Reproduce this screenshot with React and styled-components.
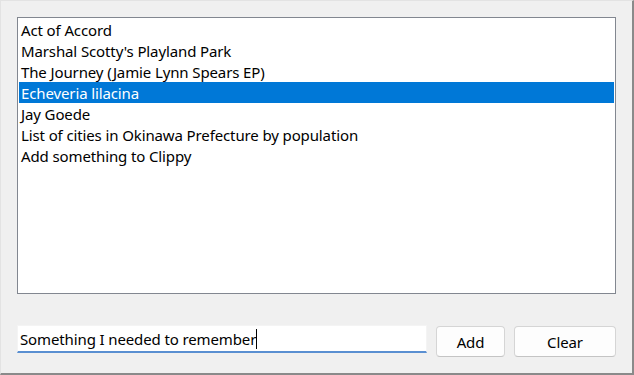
import React from "react";
import styled, { createGlobalStyle } from "styled-components";

const Global = createGlobalStyle`
  html, body { margin: 0; padding: 0; background: #f0f0f0; }
  * { box-sizing: border-box; }
`;

const Window = styled.div`
  width: 634px;
  height: 375px;
  background: #f0f0f0;
  border-top: 1px solid #e3e3e3;
  border-left: 1px solid #e3e3e3;
  border-right: 2px solid #8a8a8a;
  border-bottom: 2px solid #8a8a8a;
  padding: 16px 16px 0 16px;
  display: flex;
  flex-direction: column;
  font-family: "Noto Sans", "Open Sans", sans-serif;
  font-size: 15px;
  letter-spacing: -0.12px;
  color: #000;
`;

const ListBox = styled.div`
  height: 277px;
  background: #fff;
  border: 1px solid #828790;
  padding: 1px;
  display: flex;
  flex-direction: column;
`;

const Item = styled.div`
  height: 21px;
  line-height: 23px;
  padding-left: 2px;
  white-space: nowrap;
  overflow: hidden;
  background: ${(p) => (p.$selected ? "#0078d7" : "transparent")};
  color: ${(p) => (p.$selected ? "#fff" : "#000")};
`;

const Bottom = styled.div`
  margin-top: 31px;
  display: flex;
  align-items: flex-start;
  gap: 9px;
`;

const TextBox = styled.div`
  width: 410px;
  height: 28px;
  background: #fff;
  border: 1px solid #f4f4f4;
  border-bottom: 2px solid #5a8fd1;
  padding-left: 2px;
  padding-top: 1px;
  white-space: nowrap;
  display: flex;
  align-items: center;
`;

const Caret = styled.span`
  display: inline-block;
  width: 1px;
  height: 20px;
  background: #000;
`;

const Button = styled.div`
  width: ${(p) => p.$w}px;
  height: 31px;
  margin-top: 1px;
  background: #fdfdfd;
  border: 1px solid #d5d5d5;
  border-bottom-color: #c4c4c4;
  border-radius: 4px;
  display: flex;
  align-items: center;
  justify-content: center;
`;

const items = [
  "Act of Accord",
  "Marshal Scotty's Playland Park",
  "The Journey (Jamie Lynn Spears EP)",
  "Echeveria lilacina",
  "Jay Goede",
  "List of cities in Okinawa Prefecture by population",
  "Add something to Clippy",
];

export default function App() {
  return (
    <>
      <Global />
      <Window>
        <ListBox>
          {items.map((t, i) => (
            <Item key={i} $selected={i === 3}>
              {t}
            </Item>
          ))}
        </ListBox>
        <Bottom>
          <TextBox>
            Something I needed to remember
            <Caret />
          </TextBox>
          <Button $w={69}>Add</Button>
          <Button $w={102}>Clear</Button>
        </Bottom>
      </Window>
    </>
  );
}
